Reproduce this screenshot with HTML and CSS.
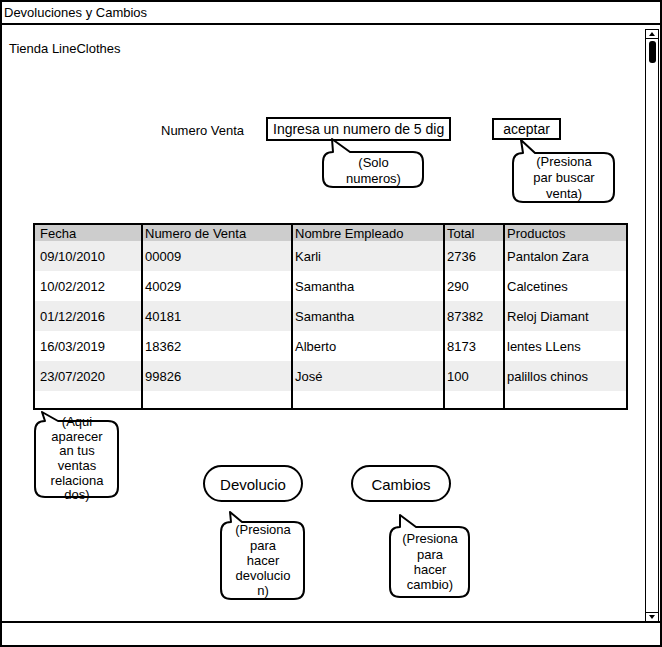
FILE: index.html
```html
<!DOCTYPE html>
<html lang="es">
<head>
    <meta charset="UTF-8">
    <meta name="viewport" content="width=device-width, initial-scale=1.0">
    <title>Devoluciones y Cambios</title>
    <link rel="stylesheet" href="styles.css">
</head>
<body>
    <div class="window">
        <div class="titlebar">Devoluciones y Cambios</div>

        <div class="main">
            <div class="content">
                <div class="store">Tienda LineClothes</div>

                <!-- busqueda de venta -->
                <div class="search">
                    <span class="search-label">Numero Venta</span>
                    <div class="search-input">Ingresa un numero de 5 dig</div>
                    <div class="search-btn">aceptar</div>
                </div>

                <!-- tabla de ventas -->
                <table class="sales">
                    <thead>
                        <tr>
                            <th class="c1">Fecha</th>
                            <th class="c2">Numero de Venta</th>
                            <th class="c3">Nombre Empleado</th>
                            <th class="c4">Total</th>
                            <th class="c5">Productos</th>
                        </tr>
                    </thead>
                    <tbody>
                        <tr><td>09/10/2010</td><td>00009</td><td>Karli</td><td>2736</td><td>Pantalon Zara</td></tr>
                        <tr><td>10/02/2012</td><td>40029</td><td>Samantha</td><td>290</td><td>Calcetines</td></tr>
                        <tr><td>01/12/2016</td><td>40181</td><td>Samantha</td><td>87382</td><td>Reloj Diamant</td></tr>
                        <tr><td>16/03/2019</td><td>18362</td><td>Alberto</td><td>8173</td><td>lentes LLens</td></tr>
                        <tr><td>23/07/2020</td><td>99826</td><td>José</td><td>100</td><td>palillos chinos</td></tr>
                        <tr class="empty"><td></td><td></td><td></td><td></td><td></td></tr>
                    </tbody>
                </table>

                <!-- botones -->
                <div class="actions">
                    <div class="pill">Devolucio</div>
                    <div class="pill">Cambios</div>
                </div>

                <!-- notas -->
                <div class="callout callout-solo">
                    <svg width="103" height="51"><path d="M10,1 L28,14 H91 Q101,14 101,24 V39 Q101,49 91,49 H11 Q1,49 1,39 V24 Q1,14 11,14 Z"/></svg>
                    <div class="callout-text">(Solo<br>numeros)</div>
                </div>
                <div class="callout callout-buscar">
                    <svg width="104" height="65"><path d="M9,1 L23,14 H92 Q102,14 102,24 V53 Q102,63 92,63 H11 Q1,63 1,53 V24 Q1,14 11,14 Z"/></svg>
                    <div class="callout-text">(Presiona<br>par buscar<br>venta)</div>
                </div>
                <div class="callout callout-tabla">
                    <svg width="86" height="88"><path d="M8,1 L24,10 H74 Q84,10 84,20 V76 Q84,86 74,86 H11 Q1,86 1,76 V20 Q1,10 11,10 Z"/></svg>
                    <div class="callout-text">(Aqui<br>aparecer<br>an tus<br>ventas<br>relaciona<br>dos)</div>
                </div>
                <div class="callout callout-devolucion">
                    <svg width="86" height="90"><path d="M10,1 L22,11 H74 Q84,11 84,21 V78 Q84,88 74,88 H11 Q1,88 1,78 V21 Q1,11 11,11 Z"/></svg>
                    <div class="callout-text">(Presiona<br>para<br>hacer<br>devolucio<br>n)</div>
                </div>
                <div class="callout callout-cambio">
                    <svg width="82" height="85"><path d="M11,1 L27,13 H70 Q80,13 80,23 V73 Q80,83 70,83 H11 Q1,83 1,73 V23 Q1,13 11,13 Z"/></svg>
                    <div class="callout-text">(Presiona<br>para<br>hacer<br>cambio)</div>
                </div>
            </div>

            <div class="scrollbar">
                <div class="sb-btn sb-up"></div>
                <div class="sb-thumb"></div>
                <div class="sb-track"></div>
                <div class="sb-btn sb-down"></div>
            </div>
        </div>

        <div class="statusbar"></div>
    </div>
</body>
</html>
```

FILE: styles.css
```css
* {
    box-sizing: border-box;
}

body {
    margin: 0;
    font-family: 'Liberation Sans', Arial, sans-serif;
    font-size: 13px;
    color: #000;
    background: #fff;
}

.window {
    width: 662px;
    height: 647px;
    border: 2px solid #000;
    display: flex;
    flex-direction: column;
}

.titlebar {
    height: 23px;
    border-bottom: 2px solid #000;
    padding-left: 2px;
    line-height: 21px;
}

.main {
    height: 598px;
    border-bottom: 2px solid #000;
    display: flex;
}

.content {
    flex: 1;
    position: relative;
}

.store {
    margin: 16px 0 0 7px;
    line-height: 16px;
}

.search {
    display: flex;
    align-items: flex-start;
    height: 24px;
    margin-top: 60px;
    padding-left: 159px;
}

.search-label {
    width: 105px;
    height: 24px;
    line-height: 28px;
}

.search-input {
    width: 185px;
    height: 24px;
    border: 2px solid #000;
    padding-left: 5px;
    font-size: 14px;
    line-height: 20px;
    white-space: nowrap;
    overflow: hidden;
}

.search-btn {
    margin: 1px 0 0 41px;
    width: 69px;
    height: 22px;
    border: 2px solid #000;
    font-size: 14px;
    line-height: 18px;
    text-align: center;
}

/* tabla */
.sales {
    margin: 82px 0 0 31px;
    width: 595px;
    border: 2px solid #000;
    border-spacing: 0;
    table-layout: fixed;
}

.sales th,
.sales td {
    padding: 0 0 0 2px;
    text-align: left;
    font-weight: normal;
    white-space: nowrap;
    overflow: hidden;
    border-left: 2px solid #000;
}

.sales th:first-child,
.sales td:first-child {
    border-left: none;
    padding-left: 5px;
}

.sales .c1 { width: 106px; }
.sales .c2 { width: 150px; }
.sales .c3 { width: 152px; }
.sales .c4 { width: 60px; }
.sales .c5 { width: 123px; }

.sales th {
    height: 16px;
    padding-top: 1px;
    line-height: 15px;
    background: #cdcdcd;
}

.sales td {
    height: 30px;
    padding-top: 2px;
    line-height: 28px;
}

.sales tbody tr:nth-child(odd) td {
    background: #eeeeee;
}

.sales tr.empty td {
    height: 17px;
    padding-top: 0;
    line-height: 17px;
    background: #fff;
}

/* botones */
.actions {
    display: flex;
    gap: 48px;
    margin-top: 55px;
    padding-left: 201px;
}

.pill {
    width: 100px;
    height: 37px;
    padding-top: 2px;
    border: 2px solid #000;
    border-radius: 19px;
    font-size: 15px;
    display: flex;
    align-items: center;
    justify-content: center;
}

/* notas */
.callout {
    position: absolute;
}

.callout svg {
    display: block;
}

.callout path {
    fill: #fff;
    stroke: #000;
    stroke-width: 2;
    stroke-linejoin: round;
}

.callout-text {
    position: absolute;
    left: 1px;
    right: 1px;
    display: flex;
    align-items: center;
    justify-content: center;
    text-align: center;
}

.callout-solo { left: 320px; top: 113px; }
.callout-solo .callout-text { top: 15px; height: 35px; line-height: 16px; }

.callout-buscar { left: 510px; top: 114px; }
.callout-buscar .callout-text { top: 14px; height: 49px; line-height: 16px; }

.callout-tabla { left: 32px; top: 386px; }
.callout-tabla .callout-text { top: 10px; height: 76px; line-height: 14.7px; }

.callout-devolucion { left: 218px; top: 486px; }
.callout-devolucion .callout-text { top: 11px; height: 77px; line-height: 15.3px; }

.callout-cambio { left: 387px; top: 489px; }
.callout-cambio .callout-text { top: 13px; height: 70px; line-height: 15.3px; }

/* scroll */
.scrollbar {
    width: 14px;
    margin: 4px 1px 0 0;
    border: 1px solid #000;
    border-bottom: none;
    display: flex;
    flex-direction: column;
}

.sb-btn {
    height: 9px;
    position: relative;
}

.sb-up {
    border-bottom: 1px solid #000;
}

.sb-down {
    border-top: 1px solid #000;
}

.sb-btn::after {
    content: '';
    position: absolute;
    left: 3px;
    top: 2px;
    border-left: 3px solid transparent;
    border-right: 3px solid transparent;
}

.sb-up::after {
    border-bottom: 4px solid #000;
}

.sb-down::after {
    border-top: 4px solid #000;
}

.sb-thumb {
    width: 7px;
    height: 22px;
    margin: 2px auto 0;
    background: #000;
    border-radius: 3px;
}

.sb-track {
    flex: 1;
}

.statusbar {
    flex: 1;
}
```
